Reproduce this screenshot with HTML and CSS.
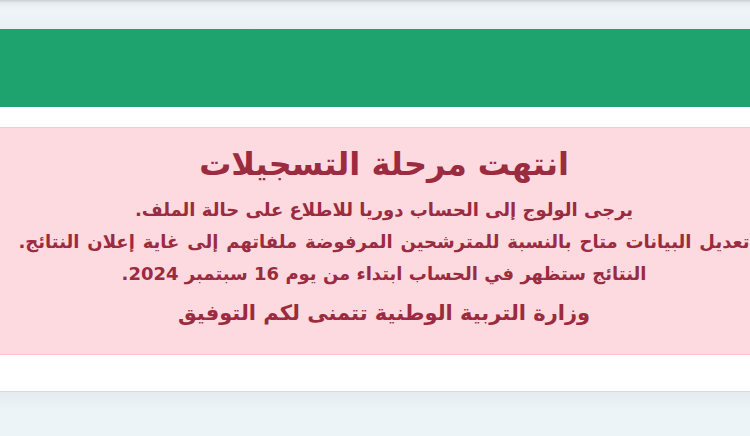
FILE: index.html
```html
<!DOCTYPE html>
<html lang="ar">
<head>
<meta charset="utf-8">
<link rel="stylesheet" href="styles.css">
</head>
<body>
<div class="page">
  <div class="topbar"></div>
  <div class="banner"></div>
  <div class="gap"></div>
  <div class="alert" dir="rtl">
    <h2 class="title">انتهت مرحلة التسجيلات</h2>
    <p class="line">يرجى الولوج إلى الحساب دوريا للاطلاع على حالة الملف.</p>
    <p class="line wide">تعديل البيانات متاح بالنسبة للمترشحين المرفوضة ملفاتهم إلى غاية إعلان النتائج.</p>
    <p class="line">النتائج ستظهر في الحساب ابتداء من يوم 16 سبتمبر 2024.</p>
    <p class="sign">وزارة التربية الوطنية تتمنى لكم التوفيق</p>
  </div>
  <div class="gap2"></div>
  <div class="footer"></div>
</div>
</body>
</html>
```
FILE: styles.css
```css
html, body { margin: 0; padding: 0; overflow: hidden; }
body { width: 750px; height: 436px; background: #ffffff; font-family: "DejaVu Sans", "Noto Sans", sans-serif; }
.page { width: 768px; display: flex; flex-direction: column; }
.topbar { height: 29px; background: linear-gradient(#c9ced3 0, #e6ecf0 3px, #eef4f7 10px, #e9eff2 100%); }
.banner { height: 78px; background: #1ea36e; }
.gap { height: 20px; background: #ffffff; }
.alert { height: 226px; background: #fdd9e0; border-top: 1px solid #f8c6cf; border-bottom: 1px solid #f8c6cf; color: #9b2b3f; text-align: center; display: flex; flex-direction: column; align-items: center; }
.title { margin: 16px 0 10px; font-size: 32px; font-weight: 700; line-height: 40px; }
.line { margin: 0; font-size: 18px; font-weight: 700; line-height: 32px; white-space: nowrap; }
.wide { word-spacing: 1.6px; }
.sign { margin: 6px 0 0; font-size: 21px; font-weight: 700; line-height: 34px; }
.gap2 { height: 36px; background: #ffffff; }
.footer { height: 44px; border-top: 1px solid #d6dbdf; background: linear-gradient(#e4eaee, #edf4f7 40%, #edf4f7); }
```
